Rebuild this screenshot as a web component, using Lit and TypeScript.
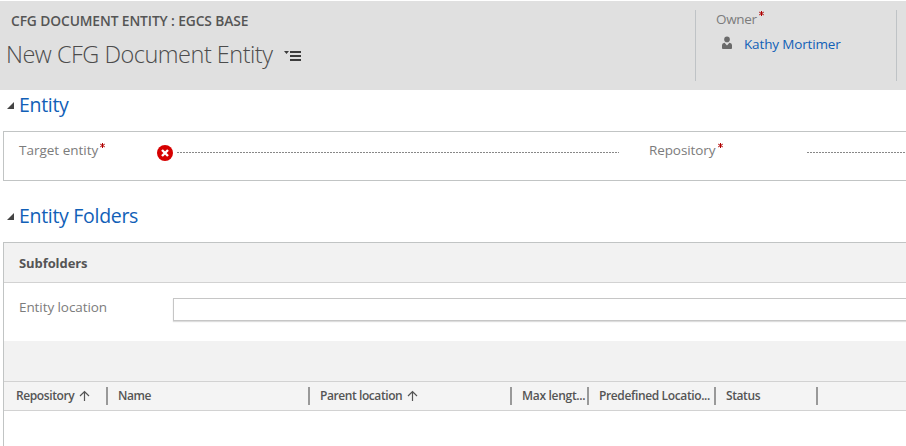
import { LitElement, html, css } from "lit";
import { customElement, property } from "lit/decorators.js";

const arrow = html`<svg class="arrow" width="11" height="12" viewBox="0 0 11 12"><path d="M5.5 11V1.5M1 6L5.5 1.5L10 6" fill="none" stroke="#555" stroke-width="1.2"/></svg>`;

const columns = [
  { label: "Repository", width: 92, sorted: true, spacing: -0.4 },
  { label: "Name", width: 192, sorted: false, spacing: -0.4 },
  { label: "Parent location", width: 192, sorted: true, spacing: -0.42 },
  { label: "Max lengt...", width: 67, sorted: false, spacing: -0.3 },
  { label: "Predefined Locatio...", width: 117, sorted: false, spacing: -0.37 },
  { label: "Status", width: 92, sorted: false, spacing: -0.4 },
];

@customElement("section-title")
export class SectionTitle extends LitElement {
  @property() label = "";
  static styles = css`
    :host { display: flex; align-items: center; height: 28px; padding-left: 7px; }
    .title { font-size: 19.5px; line-height: 28px; color: #1160b7; letter-spacing: -0.3px; margin-left: 5px; white-space: nowrap; }
    svg { display: block; }
  `;
  render() {
    return html`<svg width="7" height="7" viewBox="0 0 7 7"><path d="M7 0V7H0Z" fill="#444"/></svg><span class="title">${this.label}</span>`;
  }
}

@customElement("app-root")
export class AppRoot extends LitElement {
  static styles = css`
    :host { display: block; width: 906px; height: 446px; overflow: hidden; background: #fff; font-family: "Open Sans", "Noto Sans", sans-serif; color: #444; box-sizing: border-box; padding-top: 1px; }
    * { box-sizing: border-box; }
    svg { display: block; flex: none; }
    .header { height: 89px; background: #e0e0e0; display: flex; }
    .heading { width: 695px; }
    .kind { margin: 10px 0 0 11px; font-size: 13.8px; line-height: 20px; font-weight: 600; letter-spacing: -0.11px; color: #555; white-space: nowrap; }
    .record { display: flex; align-items: center; height: 34px; margin: 6px 0 0 6px; }
    .name { font-size: 23.5px; font-weight: 300; line-height: 34px; color: #4c4c4c; letter-spacing: -0.5px; white-space: nowrap; }
    .menu { margin: 5px 0 0 11px; }
    .owner { width: 202px; height: 71px; margin-top: 9px; border: 1px solid #bfc3c6; border-width: 0 1px; padding-left: 20px; }
    .label { display: flex; font-size: 13.5px; line-height: 20px; color: #7c7c7c; letter-spacing: -0.1px; white-space: nowrap; }
    .star { margin: 3px 0 0 2px; }
    .owner .label { margin-top: -1px; letter-spacing: -0.3px; }
    .owner .star { margin: 2px 0 0 2px; }
    .person { display: flex; align-items: center; height: 20px; margin-top: 5px; padding-left: 5px; }
    .person svg { margin-top: -2px; }
    .link { font-size: 13.5px; line-height: 20px; color: #1160b7; margin-left: 11px; letter-spacing: -0.15px; white-space: nowrap; }
    .box { margin-left: 3px; border: 1px solid #c1c4c4; border-right: 0; }
    .fields { height: 50px; display: flex; margin-top: 12px; padding-top: 8px; }
    .fields .label { padding-left: 15px; width: 153px; letter-spacing: 0; }
    .fields .label.second { padding-left: 0; margin-left: 30px; width: 158px; letter-spacing: -0.1px; }
    .second .star { margin-left: 3px; }
    .error { margin-top: 5px; }
    .line { height: 1px; margin-top: 12px; background: repeating-linear-gradient(90deg, #888 0 2px, #fff 2px 3px); }
    .line.first { width: 442px; margin-left: 4px; }
    .line.last { flex: 1; }
    .header + section-title { margin-top: 1px; }
    .fields + section-title { margin-top: 21px; }
    .panel { margin-top: 12px; height: 220px; }
    .caption { height: 40px; background: #f2f2f2; border-bottom: 1px solid #d2d2d2; padding: 10px 0 0 15px; font-size: 13px; line-height: 20px; font-weight: 700; color: #555; letter-spacing: -0.08px; }
    .location { height: 58px; display: flex; padding: 14px 0 0 15px; }
    .location .label { width: 154px; letter-spacing: -0.08px; }
    .input { flex: 1; height: 23px; margin-top: 1px; border: 1px solid #c6c6c6; border-right: 0; box-shadow: 0 1px 1px #ddd; }
    .toolbar { height: 41px; background: #f2f2f2; border-bottom: 1px solid #d2d2d2; }
    .columns { height: 29px; background: #f4f4f4; border-bottom: 1px solid #d2d2d2; display: flex; align-items: center; padding-left: 12px; }
    .column { flex: none; display: flex; align-items: center; height: 18px; margin-right: 10px; border-right: 2px solid #999; font-size: 12px; line-height: 18px; font-weight: 600; color: #555; white-space: nowrap; }
    .arrow { margin-left: 5px; }
  `;

  star() {
    return html`<svg class="star" width="5" height="5" viewBox="0 0 5 5"><path d="M2.5 0V5M0.2 1.1L4.8 3.9M4.8 1.1L0.2 3.9" stroke="#b00000" stroke-width="1"/></svg>`;
  }

  render() {
    return html`
      <div class="header">
        <div class="heading">
          <div class="kind"><span>CFG DOCUMENT ENTITY : EGCS BASE</span></div>
          <div class="record">
            <span class="name">New CFG Document Entity</span>
            <svg class="menu" width="18" height="11" viewBox="0 0 18 11"><path d="M0 0H5L2.5 3Z M6 0H17V2H6ZM6 4H17V6H6ZM6 8H17V10H6Z" fill="#3c3c3c"/></svg>
          </div>
        </div>
        <div class="owner">
          <div class="label"><span>Owner</span>${this.star()}</div>
          <div class="person">
            <svg width="12" height="14" viewBox="0 0 12 14"><circle cx="6" cy="3.4" r="2.8" fill="#6a6a6a"/><path d="M1 12.2V9Q1 7 3.6 6.8L6 9.6L8.4 6.8Q11 7 11 9V12.2Q11 13 10 13H2Q1 13 1 12.2Z" fill="#6a6a6a"/></svg>
            <span class="link">Kathy Mortimer</span>
          </div>
        </div>
      </div>
      <section-title label="Entity"></section-title>
      <div class="box fields">
        <div class="label"><span>Target entity</span>${this.star()}</div>
        <svg class="error" width="16" height="16" viewBox="0 0 16 16"><circle cx="8" cy="8" r="8" fill="#d60000"/><path d="M5 5L11 11M11 5L5 11" stroke="#fff" stroke-width="2.4"/></svg>
        <div class="line first"></div>
        <div class="label second"><span>Repository</span>${this.star()}</div>
        <div class="line last"></div>
      </div>
      <section-title label="Entity Folders"></section-title>
      <div class="box panel">
        <div class="caption"><span>Subfolders</span></div>
        <div class="location"><div class="label"><span>Entity location</span></div><div class="input"></div></div>
        <div class="toolbar"></div>
        <div class="columns">
          ${columns.map((c) => html`<div class="column" style="width:${c.width}px;letter-spacing:${c.spacing}px"><span>${c.label}</span>${c.sorted ? arrow : ""}</div>`)}
        </div>
      </div>
    `;
  }
}
